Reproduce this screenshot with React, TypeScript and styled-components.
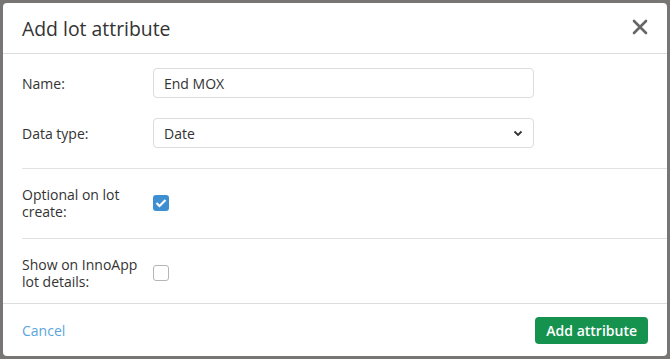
import React from 'react';
import styled, { createGlobalStyle } from 'styled-components';

const GlobalStyle = createGlobalStyle`
  html, body {
    margin: 0;
    padding: 0;
    background: #787674;
    font-family: "Open Sans", "Noto Sans", sans-serif;
    color: #333;
  }
`

interface CheckProps {
  checked?: boolean;
}

function App() {
  return (
    <>
      <GlobalStyle />
      <Backdrop>
        <Modal>
          <Header>
            <Title>Add lot attribute</Title>
            <CloseButton aria-label="Close">
              <svg width="16" height="16" viewBox="0 0 16 16">
                <path d="M2 2 L14 14 M14 2 L2 14" stroke="#666" strokeWidth="2.6" strokeLinecap="round" />
              </svg>
            </CloseButton>
          </Header>
          <Body>
            <Section $pad="14px 0 20px">
              <FieldRow>
                <Label>Name:</Label>
                <TextInput defaultValue="End MOX" />
              </FieldRow>
              <FieldRow>
                <Label>Data type:</Label>
                <SelectBox>
                  <span>Date</span>
                  <svg width="10" height="7" viewBox="0 0 10 7">
                    <path d="M1.5 1.5 L5 5 L8.5 1.5" fill="none" stroke="#333" strokeWidth="1.8" />
                  </svg>
                </SelectBox>
              </FieldRow>
            </Section>
            <Section $pad="17px 0 18px">
              <FieldRow>
                <Label>Optional on lot<br />create:</Label>
                <CheckBox checked>
                  <svg width="12" height="10" viewBox="0 0 12 10">
                    <path d="M1.5 5 L4.5 8 L10.5 2" fill="none" stroke="#fff" strokeWidth="2.2" />
                  </svg>
                </CheckBox>
              </FieldRow>
            </Section>
            <Section $pad="17px 0 13px" $last>
              <FieldRow>
                <Label>Show on InnoApp<br />lot details:</Label>
                <CheckBox />
              </FieldRow>
            </Section>
          </Body>
          <Footer>
            <CancelLink>Cancel</CancelLink>
            <PrimaryButton>Add attribute</PrimaryButton>
          </Footer>
        </Modal>
      </Backdrop>
    </>
  );
}

export default App;

const Backdrop = styled.div`
  width: 670px;
  height: 359px;
  padding: 3px;
  box-sizing: border-box;
`

const Modal = styled.div`
  width: 664px;
  height: 353px;
  background: #fff;
  border-radius: 4px;
  display: flex;
  flex-direction: column;
  box-sizing: border-box;
  overflow: hidden;
`

const Header = styled.div`
  height: 50px;
  display: flex;
  align-items: center;
  justify-content: space-between;
  padding: 0 19px 0 19px;
  border-bottom: 1px solid #dcdcdc;
`

const Title = styled.h2`
  margin: 0;
  font-size: 19.4px;
  font-weight: 500;
  color: #333;
`

const CloseButton = styled.button`
  border: none;
  background: none;
  padding: 0;
  margin-top: -2px;
  display: flex;
  cursor: pointer;
`

const Body = styled.div`
  padding: 0 0 0 19px;
  display: flex;
  flex-direction: column;
`

const Section = styled.div<{ $pad: string; $last?: boolean }>`
  display: flex;
  flex-direction: column;
  gap: 20px;
  padding: ${p => p.$pad};
  border-bottom: ${p => p.$last ? 'none' : '1px solid #e2e2e2'};
`

const FieldRow = styled.div`
  display: flex;
  align-items: center;
`

const Label = styled.div`
  width: 131px;
  font-size: 14px;
  line-height: 17px;
  color: #333;
`

const TextInput = styled.input`
  width: 381px;
  height: 30px;
  box-sizing: border-box;
  border: 1px solid #dcdcdc;
  border-radius: 4px;
  padding: 0 10px;
  font-family: "Open Sans", sans-serif;
  font-size: 14px;
  color: #333;
  outline: none;
`

const SelectBox = styled.div`
  width: 381px;
  height: 30px;
  box-sizing: border-box;
  border: 1px solid #dcdcdc;
  border-radius: 4px;
  padding: 0 10px 0 10px;
  display: flex;
  align-items: center;
  justify-content: space-between;
  font-size: 14px;
  color: #333;
`

const CheckBox = styled.div<CheckProps>`
  width: 16px;
  height: 16px;
  box-sizing: border-box;
  border-radius: 3px;
  display: flex;
  align-items: center;
  justify-content: center;
  background: ${p => p.checked ? '#3d8fd2' : '#fff'};
  border: ${p => p.checked ? 'none' : '1px solid #b5b5b5'};
`

const Footer = styled.div`
  flex: 1;
  border-top: 1px solid #dcdcdc;
  display: flex;
  align-items: center;
  justify-content: space-between;
  padding: 0 19px 0 19px;
`

const CancelLink = styled.a`
  font-size: 14px;
  color: #5aa6dc;
  cursor: pointer;
`

const PrimaryButton = styled.button`
  height: 27px;
  padding: 0 11px;
  border: none;
  border-radius: 4px;
  background: #16924f;
  color: #fff;
  font-family: "Open Sans", sans-serif;
  font-size: 14px;
  font-weight: 600;
  cursor: pointer;
`
